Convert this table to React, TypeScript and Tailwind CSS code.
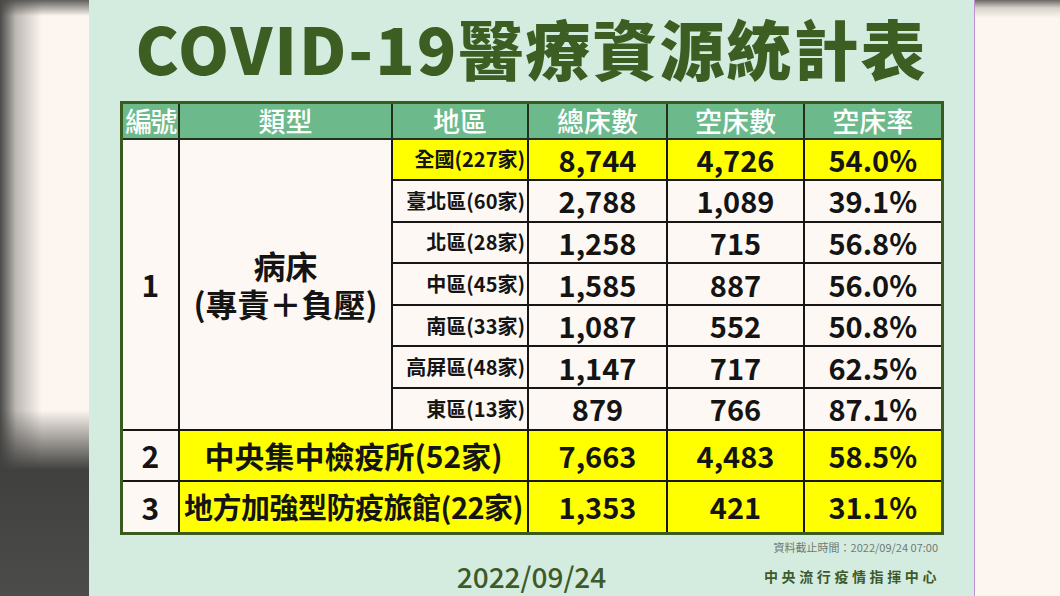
const cjk = { fontFamily: '"Noto Sans CJK TC", "Noto Sans", sans-serif' };

type Row = { area: string; total: string; empty: string; rate: string; hl?: boolean };

const bedRows: Row[] = [
  { area: '全國(227家)', total: '8,744', empty: '4,726', rate: '54.0%', hl: true },
  { area: '臺北區(60家)', total: '2,788', empty: '1,089', rate: '39.1%' },
  { area: '北區(28家)', total: '1,258', empty: '715', rate: '56.8%' },
  { area: '中區(45家)', total: '1,585', empty: '887', rate: '56.0%' },
  { area: '南區(33家)', total: '1,087', empty: '552', rate: '50.8%' },
  { area: '高屏區(48家)', total: '1,147', empty: '717', rate: '62.5%' },
  { area: '東區(13家)', total: '879', empty: '766', rate: '87.1%' },
];

const cell = 'border-2 border-[#161616] p-0 text-center align-middle';
const num = `${cell} text-[29px] font-bold`;

export default function App() {
  return (
    <div className="w-[1060px] h-[596px] flex overflow-hidden" style={cjk}>
      {/* blurred left edge */}
      <div className="w-[89px] h-full bg-[#fdf6f0] bg-[linear-gradient(to_bottom,rgba(70,70,68,0.85)_0px,rgba(70,70,68,0)_16px,rgba(70,70,68,0)_410px,#40403e_470px,#4c4c4a_596px),linear-gradient(to_right,#4a4a48_0px,#bdb9b4_16px,#fdf6f0_42px)]" />

      {/* main panel */}
      <div className="w-[886px] h-full bg-[#d4ece0] border-r border-[#c08fd6] flex flex-col">
        <div className="h-[92px] flex items-center justify-center pt-[2px]">
          <h1 className="text-[65px] font-black text-[#3c5e22] leading-none tracking-[2px]">
            COVID-19醫療資源統計表
          </h1>
        </div>

        <table className="mt-[9px] mx-auto w-[821px] table-fixed border-collapse border-[3px] border-[#3a5a1e] bg-[#fdf8f3] text-[#141414]">
          <colgroup>
            <col className="w-[58px]" />
            <col className="w-[213px]" />
            <col className="w-[136px]" />
            <col className="w-[139px]" />
            <col className="w-[137px]" />
            <col className="w-[138px]" />
          </colgroup>
          <thead>
            <tr className="h-[36px] bg-[#6cba8b] text-white text-[27px] font-medium leading-none">
              <th className="border-2 border-[#23301a] p-0 font-medium tracking-[-2px]">編號</th>
              <th className="border-2 border-[#23301a] p-0 font-medium">類型</th>
              <th className="border-2 border-[#23301a] p-0 font-medium">地區</th>
              <th className="border-2 border-[#23301a] p-0 font-medium">總床數</th>
              <th className="border-2 border-[#23301a] p-0 font-medium">空床數</th>
              <th className="border-2 border-[#23301a] p-0 font-medium">空床率</th>
            </tr>
          </thead>
          <tbody className="leading-none">
            {bedRows.map((r, i) => (
              <tr key={r.area} className={`h-[41.6px] ${r.hl ? 'bg-[#ffff00]' : ''}`}>
                {i === 0 && (
                  <>
                    <td rowSpan={7} className={`${cell} bg-[#fdf8f3] text-[30px] font-bold`}>1</td>
                    <td rowSpan={7} className={`${cell} bg-[#fdf8f3] text-[32px] font-bold leading-[38px]`}>
                      <div>病床</div>
                      <div>(專責＋負壓)</div>
                    </td>
                  </>
                )}
                <td className={`${cell} text-right pr-[2px] text-[20px] font-bold`}>{r.area}</td>
                <td className={num}>{r.total}</td>
                <td className={num}>{r.empty}</td>
                <td className={num}>{r.rate}</td>
              </tr>
            ))}
            <tr className="h-[51px]">
              <td className={`${cell} text-[30px] font-bold`}>2</td>
              <td colSpan={2} className={`${cell} bg-[#ffff00] text-[30px] font-bold`}>中央集中檢疫所(52家)</td>
              <td className={`${num} bg-[#ffff00]`}>7,663</td>
              <td className={`${num} bg-[#ffff00]`}>4,483</td>
              <td className={`${num} bg-[#ffff00]`}>58.5%</td>
            </tr>
            <tr className="h-[53px]">
              <td className={`${cell} text-[30px] font-bold`}>3</td>
              <td colSpan={2} className={`${cell} bg-[#ffff00] text-[29px] font-bold tracking-[-0.5px] whitespace-nowrap`}>
                地方加強型防疫旅館(22家)
              </td>
              <td className={`${num} bg-[#ffff00]`}>1,353</td>
              <td className={`${num} bg-[#ffff00]`}>421</td>
              <td className={`${num} bg-[#ffff00]`}>31.1%</td>
            </tr>
          </tbody>
        </table>

        {/* footer */}
        <div className="mx-auto w-[821px] pr-[4px] mt-[7px] text-right text-[11px] leading-none text-[#6f7a72]">
          資料截止時間：2022/09/24 07:00
        </div>
        <div className="mx-auto w-[821px] grid grid-cols-3 items-center mt-[9px]">
          <div />
          <div className="text-center text-[28px] font-medium leading-none text-[#3d5a2a]">2022/09/24</div>
          <div className="text-right pr-[2px] text-[14px] font-bold leading-none tracking-[3.6px] text-[#3d5a2a]">
            中央流行疫情指揮中心
          </div>
        </div>
      </div>

      {/* blurred right edge */}
      <div className="flex-1 h-full bg-[#fdf6f0] bg-[linear-gradient(to_bottom,#6b6764_0px,#d8d2cc_8px,#fdf6f0_18px)]" />
    </div>
  );
}
